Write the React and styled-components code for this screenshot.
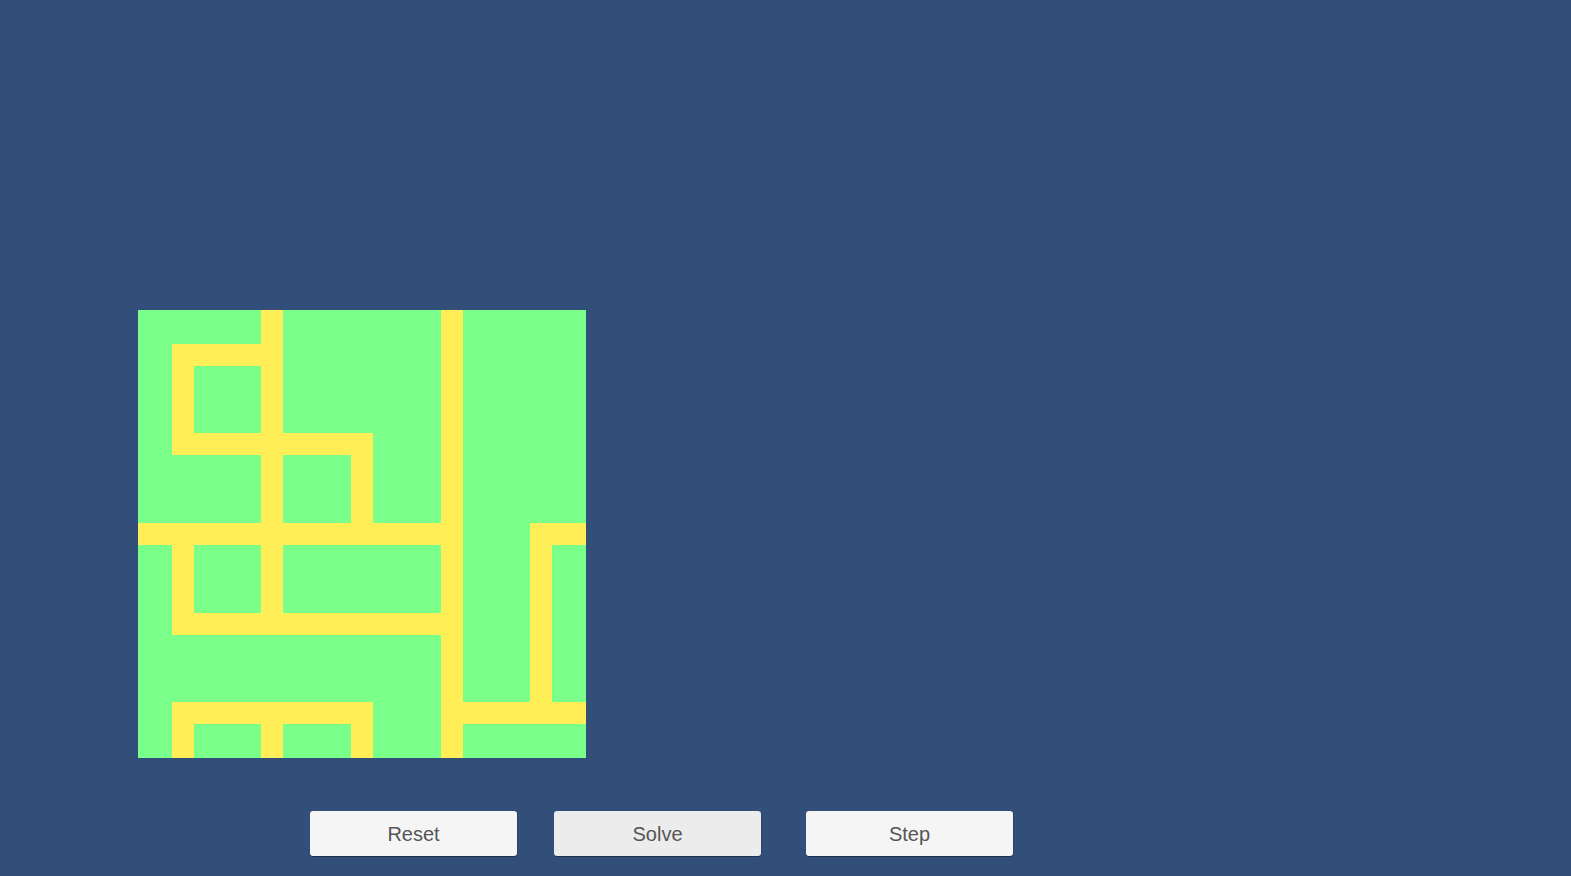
import React from "react";
import styled, { createGlobalStyle } from "styled-components";

const Global = createGlobalStyle`
  html, body { margin: 0; padding: 0; background: #324f7a; }
  body { font-family: "Liberation Sans", Arial, sans-serif; }
`;

const Page = styled.div`
  width: 1571px;
  height: 876px;
  box-sizing: border-box;
  padding: 310px 0 0 138px;
  background: #324f7a;
  display: flex;
  flex-direction: column;
  gap: 53px;
  overflow: hidden;
`;

const Board = styled.svg`
  display: block;
  width: 448px;
  height: 448px;
`;

const ButtonRow = styled.div`
  display: flex;
  margin-left: 172px;
`;

const Button = styled.button`
  width: 207px;
  height: 45px;
  margin-left: ${(p) => p.$gap || 0}px;
  border: none;
  border-radius: 3px;
  background: ${(p) => (p.$active ? "#ececec" : "#f5f5f5")};
  box-shadow: 0 1px 0 rgba(0, 0, 0, 0.35), 1px 0 0 rgba(0, 0, 0, 0.15);
  color: #555555;
  font-family: "Liberation Sans", Arial, sans-serif;
  font-size: 20px;
  padding: 2px 0 0;
  cursor: pointer;
`;

// connections per cell: U, D, L, R
const GRID = [
  ["RD", "ULD", "", "UD", ""],
  ["UR", "ULRD", "LD", "UD", ""],
  ["LRD", "ULRD", "ULR", "ULD", "RD"],
  ["UR", "ULR", "LR", "ULD", "UD"],
  ["RD", "LRD", "LD", "URD", "ULR"],
];

const CELL = 89.6;
const W = 22;
const H = W / 2;

function cellRects(r, c, conn) {
  if (!conn) return [];
  const cx = c * CELL + CELL / 2;
  const cy = r * CELL + CELL / 2;
  const x0 = c * CELL;
  const y0 = r * CELL;
  const rects = [{ x: cx - H, y: cy - H, w: W, h: W }];
  if (conn.includes("U")) rects.push({ x: cx - H, y: y0, w: W, h: cy - y0 + H });
  if (conn.includes("D")) rects.push({ x: cx - H, y: cy - H, w: W, h: y0 + CELL - cy + H });
  if (conn.includes("L")) rects.push({ x: x0, y: cy - H, w: cx - x0 + H, h: W });
  if (conn.includes("R")) rects.push({ x: cx - H, y: cy - H, w: x0 + CELL - cx + H, h: W });
  return rects;
}

function Maze() {
  const rects = [];
  GRID.forEach((row, r) =>
    row.forEach((conn, c) => {
      cellRects(r, c, conn).forEach((rc, i) =>
        rects.push(
          <rect key={`${r}-${c}-${i}`} x={rc.x} y={rc.y} width={rc.w} height={rc.h} fill="#ffee55" shapeRendering="crispEdges" />
        )
      );
    })
  );
  return (
    <Board viewBox="0 0 448 448">
      <rect x="0" y="0" width="448" height="448" fill="#7bff8b" />
      {rects}
    </Board>
  );
}

export default function App() {
  return (
    <>
      <Global />
      <Page>
        <Maze />
        <ButtonRow>
          <Button>Reset</Button>
          <Button $gap={37} $active>Solve</Button>
          <Button $gap={45}>Step</Button>
        </ButtonRow>
      </Page>
    </>
  );
}
